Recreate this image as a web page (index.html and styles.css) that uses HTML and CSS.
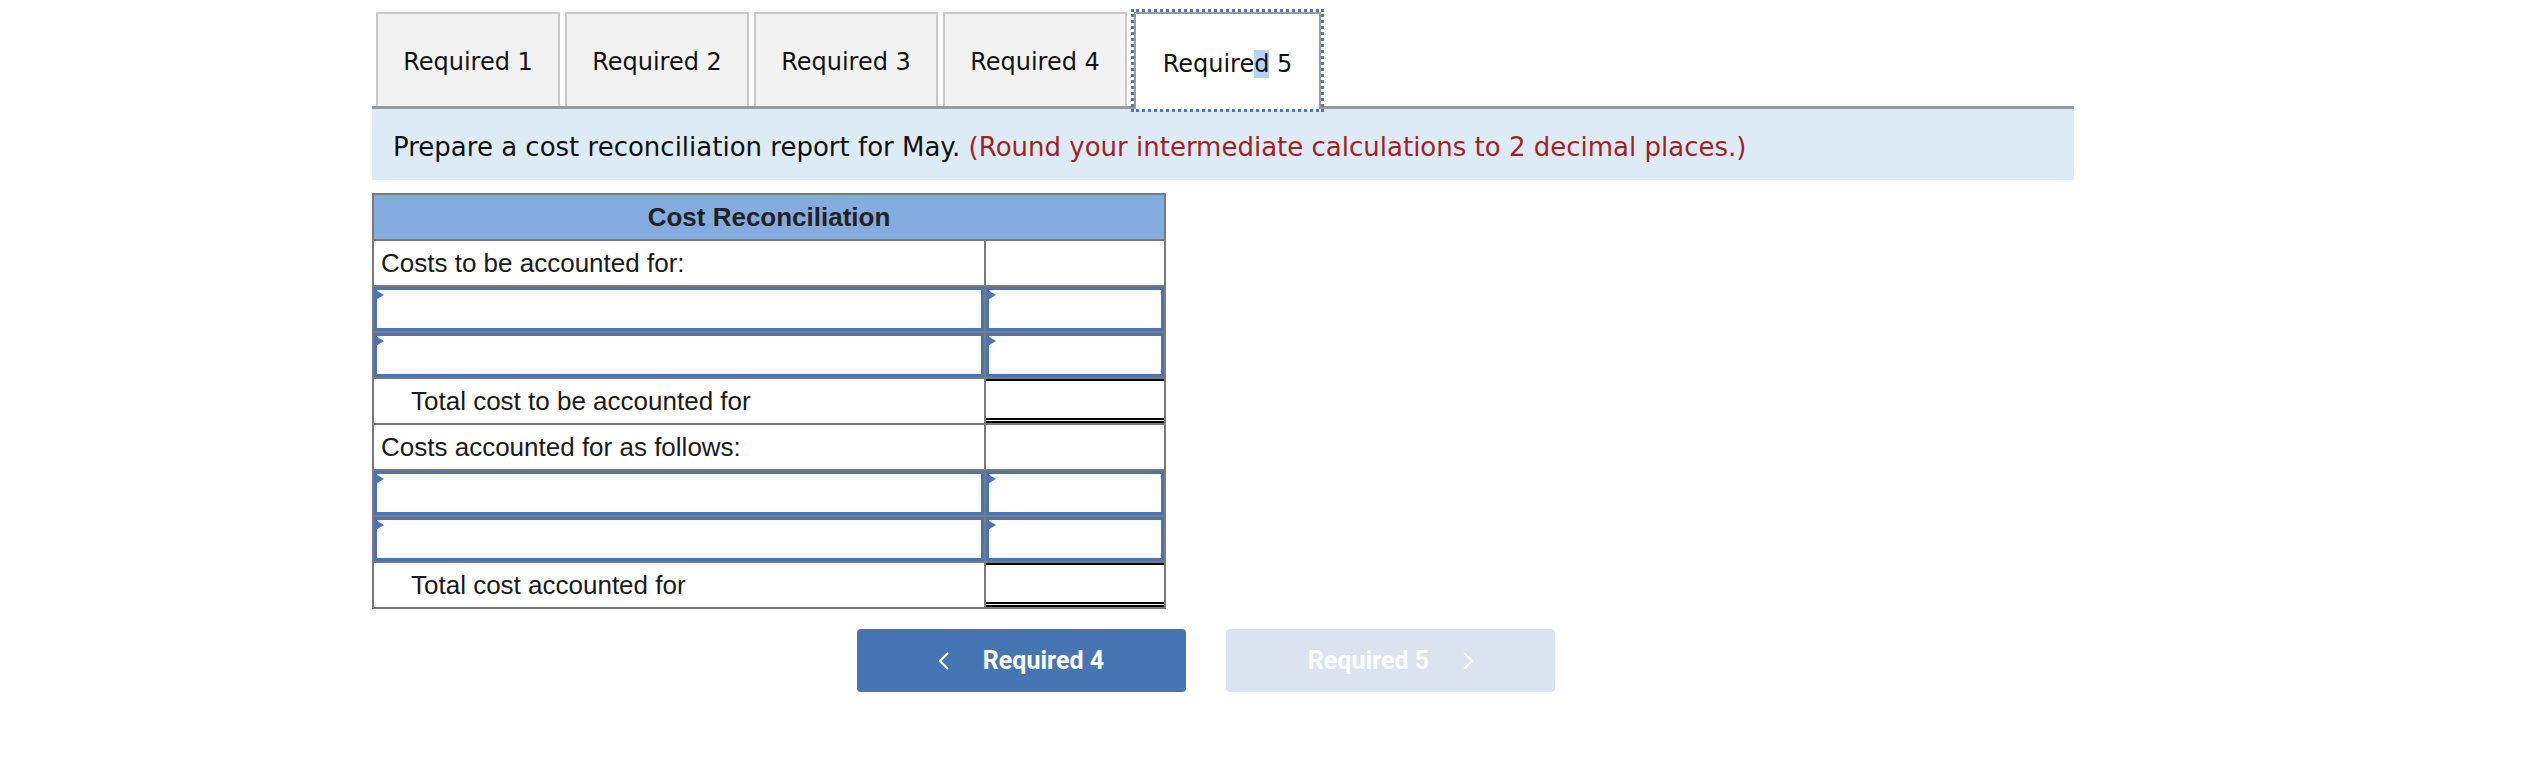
FILE: index.html
```html
<!DOCTYPE html>
<html lang="en">
<head>
<meta charset="utf-8">
<title>Required 5</title>
<link rel="stylesheet" href="styles.css">
</head>
<body>
<div class="page">
  <div class="tabs">
    <div class="tab"><span>Required 1</span></div>
    <div class="tab"><span>Required 2</span></div>
    <div class="tab"><span>Required 3</span></div>
    <div class="tab"><span>Required 4</span></div>
    <div class="tab active"><span>Require<span class="sel">d</span> 5</span></div>
  </div>
  <div class="band"><span>Prepare a cost reconciliation report for May. <span class="note">(Round your intermediate calculations to 2 decimal places.)</span></span></div>

  <table class="recon">
    <colgroup><col class="c1"><col class="c2"></colgroup>
    <thead>
      <tr><th colspan="2">Cost Reconciliation</th></tr>
    </thead>
    <tbody>
      <tr><td class="label">Costs to be accounted for:</td><td class="amt"></td></tr>
      <tr><td><div class="field"><svg class="flag" viewBox="0 0 10 12" width="10" height="12"><polygon points="0,0 10,6 0,12" fill="#4a74b5"/></svg></div></td><td><div class="field"><svg class="flag" viewBox="0 0 10 12" width="10" height="12"><polygon points="0,0 10,6 0,12" fill="#4a74b5"/></svg></div></td></tr>
      <tr><td><div class="field"><svg class="flag" viewBox="0 0 10 12" width="10" height="12"><polygon points="0,0 10,6 0,12" fill="#4a74b5"/></svg></div></td><td><div class="field"><svg class="flag" viewBox="0 0 10 12" width="10" height="12"><polygon points="0,0 10,6 0,12" fill="#4a74b5"/></svg></div></td></tr>
      <tr><td class="label total">Total cost to be accounted for</td><td class="amt"><div class="tot"></div></td></tr>
      <tr><td class="label">Costs accounted for as follows:</td><td class="amt"></td></tr>
      <tr><td><div class="field"><svg class="flag" viewBox="0 0 10 12" width="10" height="12"><polygon points="0,0 10,6 0,12" fill="#4a74b5"/></svg></div></td><td><div class="field"><svg class="flag" viewBox="0 0 10 12" width="10" height="12"><polygon points="0,0 10,6 0,12" fill="#4a74b5"/></svg></div></td></tr>
      <tr><td><div class="field"><svg class="flag" viewBox="0 0 10 12" width="10" height="12"><polygon points="0,0 10,6 0,12" fill="#4a74b5"/></svg></div></td><td><div class="field"><svg class="flag" viewBox="0 0 10 12" width="10" height="12"><polygon points="0,0 10,6 0,12" fill="#4a74b5"/></svg></div></td></tr>
      <tr><td class="label total">Total cost accounted for</td><td class="amt"><div class="tot"></div></td></tr>
    </tbody>
  </table>

  <div class="nav">
    <button class="btn prev"><svg class="chev" viewBox="0 0 10 18" width="10" height="18"><polyline points="9,1 1,9 9,17" fill="none" stroke="#fff" stroke-width="2"/></svg><span>Required 4</span></button>
    <button class="btn next"><span>Required 5</span><svg class="chev" viewBox="0 0 10 18" width="10" height="18"><polyline points="1,1 9,9 1,17" fill="none" stroke="#fff" stroke-width="2"/></svg></button>
  </div>
</div>
</body>
</html>
```
FILE: styles.css
```css
html, body {
  margin: 0;
  padding: 0;
  background: #fff;
}

.page {
  padding-left: 372px;
  padding-top: 12px;
}

.tabs {
  display: flex;
  gap: 5px;
  width: 1698px;
  padding-left: 4px;
  border-bottom: 3px solid #9a9a9a;
  height: 94px;
}

.tab {
  box-sizing: border-box;
  width: 184px;
  height: 94px;
  padding-top: 4px;
  background: #f2f2f2;
  border: 2px solid #c9c9c9;
  border-bottom: none;
  display: flex;
  align-items: center;
  justify-content: center;
  font-family: "DejaVu Sans", Verdana, sans-serif;
  font-size: 24px;
  color: #111;
  white-space: pre;
}

.tab.active {
  background: #fff;
  border-color: #9a9a9a;
  height: 97px;
  outline: 3px dotted #4a78be;
  position: relative;
  z-index: 1;
  margin-left: 2px;
  width: 187px;
}

.sel {
  background: #b4d4fb;
}

.band {
  width: 1702px;
  box-sizing: border-box;
  height: 71px;
  padding-top: 4px;
  background: #ddebf7;
  padding-left: 21px;
  display: flex;
  align-items: center;
  font-family: "DejaVu Sans", Verdana, sans-serif;
  font-size: 26px;
  color: #111;
  white-space: pre;
}

.note {
  color: #a51f1f;
}

.recon {
  margin-top: 13px;
  border-collapse: collapse;
  table-layout: fixed;
  width: 792px;
  border: 2px solid #7a7a7a;
  font-family: "Liberation Sans", Arial, sans-serif;
}

.recon col.c1 {
  width: 612px;
}

.recon col.c2 {
  width: 180px;
}

.recon th {
  background: #84acdf;
  height: 44px;
  padding: 0;
  font-size: 26px;
  font-weight: bold;
  color: #222;
  border: 2px solid #7a7a7a;
}

.recon td {
  height: 44px;
  padding: 0;
  border: 2px solid #7a7a7a;
  font-size: 26px;
  color: #1a1a1a;
  vertical-align: middle;
  white-space: nowrap;
}

.recon td.label {
  padding-left: 7px;
}

.recon td.label.total {
  padding-left: 37px;
}

.field {
  position: relative;
  box-sizing: border-box;
  height: 44px;
  border: 3px solid #4a74b5;
}

.flag {
  position: absolute;
  left: -3px;
  top: -1px;
  display: block;
}

.tot {
  box-sizing: border-box;
  height: 44px;
  border-top: 2px solid #000;
  border-bottom: 5px double #000;
}

.nav {
  display: flex;
  gap: 40px;
  margin-top: 20px;
  margin-left: 485px;
}

.btn {
  box-sizing: border-box;
  width: 329px;
  height: 63px;
  border: none;
  border-radius: 4px;
  display: flex;
  align-items: center;
  justify-content: center;
  gap: 34px;
  font-family: Roboto, "Liberation Sans", sans-serif;
  font-weight: bold;
  font-size: 25px;
  color: #fff;
  padding: 0;
}

.btn.prev {
  background: #4775b3;
}

.btn.next {
  background: #dae3ef;
}

.chev {
  display: block;
}
```
